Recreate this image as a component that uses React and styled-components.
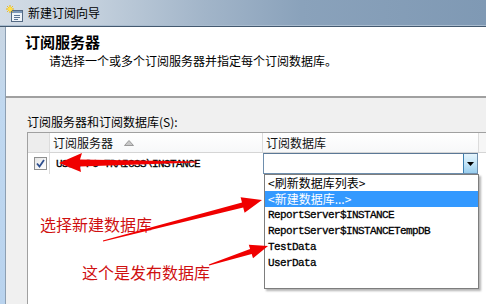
import React from 'react'
import styled, { createGlobalStyle } from 'styled-components'

const CJK = `"Noto Sans CJK SC", "Noto Sans", sans-serif`
const MONO = `"Liberation Mono", "Noto Sans CJK SC", monospace`

const GlobalStyle = createGlobalStyle`
    html, body {
        margin: 0;
        padding: 0;
    }
    body {
        background: #f0f0f0;
        font-family: ${CJK};
    }
`

const Window = styled.div`
    position: relative;
    width: 486px;
    height: 304px;
    overflow: hidden;
    display: flex;
    flex-direction: column;
    background: #f0f0f0;
`

const TitleBar = styled.div`
    flex: 0 0 27px;
    box-sizing: border-box;
    display: flex;
    align-items: center;
    gap: 5px;
    padding-left: 6px;
    background: linear-gradient(90deg, #d3dce6 0%, #c2cfdc 20%, #a2b5c9 42%, #8aa2bb 62%, #7f99b4 100%);
    border-bottom: 1px solid #44596f;
    box-shadow: inset 0 -1px 0 #a9bccf;
`

const TitleText = styled.span`
    font-size: 12px;
    line-height: 14px;
    color: #000;
`

const Main = styled.div`
    flex: 1;
    display: flex;
    min-height: 0;
`

const Frame = styled.div`
    flex: 0 0 6px;
    box-sizing: border-box;
    background: linear-gradient(180deg, #c9d6e3 0%, #c0d8f0 30%, #b9d3ee 100%);
    border-right: 1px solid #8d9fb2;
`

const Content = styled.div`
    flex: 1;
    display: flex;
    flex-direction: column;
    min-width: 0;
`

const Header = styled.div`
    flex: 0 0 71px;
    box-sizing: border-box;
    background: #fff;
    border-bottom: 2px solid #a0a0a0;
    padding: 7px 0 0 19px;
`

const PageTitle = styled.div`
    font-size: 15px;
    line-height: 16px;
    font-weight: bold;
    color: #000;
`

const PageSub = styled.div`
    margin: 4px 0 0 24px;
    font-size: 12px;
    line-height: 14px;
    color: #000;
`

const Body = styled.div`
    flex: 1;
    display: flex;
    flex-direction: column;
    padding: 17px 0 0 21px;
    min-height: 0;
`

const Label = styled.div`
    font-size: 12px;
    line-height: 14px;
    color: #000;
    margin-bottom: 3px;
`

const Grid = styled.div`
    position: relative;
    flex: 1;
    background: #fff;
    border-top: 1px solid #a0a0a0;
    border-left: 1px solid #a0a0a0;
`

const Row = styled.div`
    display: flex;
    height: ${p => p.$h}px;
    box-sizing: border-box;
    border-bottom: ${p => (p.$head ? '1px solid #d5d5d5' : 'none')};
    background: ${p => (p.$head ? 'linear-gradient(180deg, #ffffff 0%, #f7f8f9 100%)' : '#fff')};
`

const Cell = styled.div`
    flex: 0 0 ${p => p.$w}px;
    box-sizing: border-box;
    display: flex;
    align-items: center;
    gap: 11px;
    padding-left: ${p => p.$pad || 0}px;
    border-right: ${p => (p.$line ? '1px solid #dcdcdc' : 'none')};
    background: ${p => p.$bg || 'transparent'};
    font-size: 12px;
    color: #111;
    white-space: nowrap;
`

const Filler = styled.div`
    flex: 1;
    background: ${p => p.$bg || 'transparent'};
`

const RowText = styled.span`
    font-family: ${MONO};
    font-size: 11px;
    letter-spacing: -0.6px;
    color: #000;
    -webkit-text-stroke: 0.3px #000;
`

const Check = styled.div`
    width: 13px;
    height: 13px;
    box-sizing: border-box;
    border: 1px solid #8e8f8f;
    background: linear-gradient(135deg, #e4e4e4 0%, #f7f7f7 60%, #ffffff 100%);
    display: flex;
    align-items: center;
    justify-content: center;
`

const Combo = styled.div`
    width: 215px;
    height: 21px;
    box-sizing: border-box;
    border: 1px solid #6e8ead;
    border-top-color: #5b7896;
    background: #fff;
    display: flex;
    justify-content: flex-end;
`

const DropButton = styled.div`
    width: 14px;
    box-sizing: border-box;
    border-left: 1px solid #3c7fb1;
    background: linear-gradient(180deg, #e6f5fd 0%, #c4e5f8 50%, #98cdee 100%);
    display: flex;
    align-items: center;
    justify-content: center;
`

const DropList = styled.div`
    position: absolute;
    left: 236px;
    top: 41px;
    width: 215px;
    height: 115px;
    box-sizing: border-box;
    border: 1px solid #7d7d7d;
    background: #fff;
    box-shadow: 2px 2px 2px rgba(0, 0, 0, 0.3);
`

const Item = styled.div`
    height: 16px;
    line-height: 16px;
    padding-left: 3px;
    white-space: nowrap;
    font-family: ${p => (p.$mono ? MONO : CJK)};
    font-size: ${p => (p.$mono ? 11 : 12)}px;
    letter-spacing: ${p => (p.$mono ? '-0.6px' : '0')};
    -webkit-text-stroke: ${p => (p.$mono ? '0.3px currentColor' : '0')};
    background: ${p => (p.$active ? '#3399ff' : 'transparent')};
    color: ${p => (p.$active ? '#fff' : '#000')};
`

const Note = styled.div`
    position: absolute;
    left: ${p => p.$x}px;
    top: ${p => p.$y}px;
    font-size: 16px;
    line-height: 16px;
    color: #cf1010;
    white-space: nowrap;
`

const Arrows = styled.svg`
    position: absolute;
    left: 0;
    top: 0;
    pointer-events: none;
`

function WizardIcon() {
    return (
        <svg width="17" height="17" viewBox="0 0 17 17">
            <rect x="5.5" y="5.5" width="11" height="11" fill="#eef3f9" stroke="#546a84" />
            <rect x="6" y="6" width="10" height="2" fill="#7b97b8" />
            <line x1="8" y1="10.5" x2="14" y2="10.5" stroke="#5a7494" />
            <line x1="8" y1="12.5" x2="14" y2="12.5" stroke="#5a7494" />
            <line x1="8" y1="14.5" x2="12" y2="14.5" stroke="#5a7494" />
            <g stroke="#f0b400" strokeWidth="1">
                <line x1="4" y1="0" x2="4" y2="8" />
                <line x1="0" y1="4" x2="8" y2="4" />
                <line x1="1.2" y1="1.2" x2="6.8" y2="6.8" />
                <line x1="6.8" y1="1.2" x2="1.2" y2="6.8" />
            </g>
            <circle cx="4" cy="4" r="2.2" fill="#ffe14a" />
        </svg>
    )
}

function SortUp() {
    return (
        <svg width="10" height="6" viewBox="0 0 10 6">
            <polygon points="5,0.5 9.5,5.5 0.5,5.5" fill="#c8c8c8" stroke="#9a9a9a" />
        </svg>
    )
}

function CheckMark() {
    return (
        <svg width="9" height="9" viewBox="0 0 9 9">
            <polyline points="1,4.5 3.5,7.5 8,1" fill="none" stroke="#2e4f8f" strokeWidth="1.8" />
        </svg>
    )
}

function DownTri() {
    return (
        <svg width="7" height="4" viewBox="0 0 7 4">
            <polygon points="0,0 7,0 3.5,4" fill="#000" />
        </svg>
    )
}

const DB_ITEMS = [
    { text: '<刷新数据库列表>' },
    { text: '<新建数据库...>', active: true },
    { text: 'ReportServer$INSTANCE', mono: true },
    { text: 'ReportServer$INSTANCETempDB', mono: true },
    { text: 'TestData', mono: true },
    { text: 'UserData', mono: true },
]

export default function App() {
    return (
        <Window>
            <GlobalStyle />
            <TitleBar>
                <WizardIcon />
                <TitleText>新建订阅向导</TitleText>
            </TitleBar>
            <Main>
                <Frame />
                <Content>
                    <Header>
                        <PageTitle>订阅服务器</PageTitle>
                        <PageSub>请选择一个或多个订阅服务器并指定每个订阅数据库。</PageSub>
                    </Header>
                    <Body>
                        <Label>订阅服务器和订阅数据库(S):</Label>
                        <Grid>
                            <Row $h={20} $head>
                                <Cell $w={22} $line $bg="#ededed" />
                                <Cell $w={213} $pad={3} $line>
                                    订阅服务器 <SortUp />
                                </Cell>
                                <Cell $w={216} $pad={3} $line>订阅数据库</Cell>
                                <Filler $bg="#f6f6f6" />
                            </Row>
                            <Row $h={21}>
                                <Cell $w={22} $pad={6} $line>
                                    <Check><CheckMark /></Check>
                                </Cell>
                                <Cell $w={213} $pad={6}>
                                    <RowText>{'USER-PC-TRAICSS\\INSTANCE'}</RowText>
                                </Cell>
                                <Cell $w={216}>
                                    <Combo>
                                        <DropButton><DownTri /></DropButton>
                                    </Combo>
                                </Cell>
                                <Filler />
                            </Row>
                            <DropList>
                                {DB_ITEMS.map(it => (
                                    <Item key={it.text} $mono={it.mono} $active={it.active}>
                                        {it.text}
                                    </Item>
                                ))}
                            </DropList>
                        </Grid>
                    </Body>
                </Content>
            </Main>

            {/* red annotations drawn over the dialog */}
            <Note $x={40} $y={216}>选择新建数据库</Note>
            <Note $x={82} $y={264}>这个是发布数据库</Note>
            <Arrows width="486" height="304" viewBox="0 0 486 304">
                <polygon
                    fill="#f00000"
                    points="59,163 82,153 80,159.5 197,161.5 197,162.5 80,166.5 81,172"
                />
                <polygon
                    fill="#f00000"
                    points="262,200 244.6,212.8 243.2,207.4 103.1,241.5 102.9,240.5 242,202.6 240.6,197.2"
                />
                <polygon
                    fill="#f00000"
                    points="268,246 253,258.2 251.7,253.9 209.2,265.5 208.8,264.5 250.1,249.1 248.8,244.8"
                />
            </Arrows>
        </Window>
    )
}
